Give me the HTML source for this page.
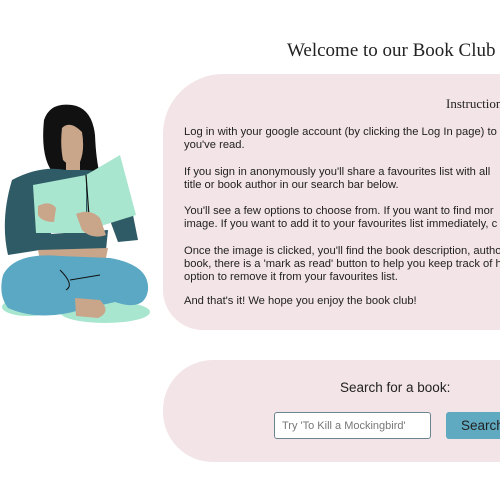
<!DOCTYPE html>
<html><head><style>
body{margin:0;width:500px;height:500px;overflow:hidden;background:#fff;font-family:"Liberation Sans",sans-serif;position:relative}
h1{position:absolute;left:287px;top:40px;margin:0;font:19px "Liberation Serif",serif;white-space:nowrap;color:#222}
.p1{position:absolute;left:163px;top:74px;width:400px;height:256px;background:#f3e4e7;border-radius:60px 0 0 40px}
.p2{position:absolute;left:163px;top:360px;width:400px;height:102px;background:#f3e4e7;border-radius:50px 0 0 50px}
.t{position:absolute;left:184px;font-size:11.2px;line-height:13px;color:#222;white-space:nowrap}
</style></head><body>
<h1>Welcome to our Book Club</h1>
<div class="p1"></div>
<div class="p2"></div>
<div style="position:absolute;left:446px;top:96px;font:13px 'Liberation Serif',serif;color:#222;white-space:nowrap">Instructions</div>
<div class="t" style="top:126px">Log in with your google account (by clicking the Log In page) to<br>you've read.</div>
<div class="t" style="top:166px">If you sign in anonymously you'll share a favourites list with all<br>title or book author in our search bar below.</div>
<div class="t" style="top:205px">You'll see a few options to choose from. If you want to find mor<br>image. If you want to add it to your favourites list immediately, c</div>
<div class="t" style="top:245px">Once the image is clicked, you'll find the book description, autho<br>book, there is a 'mark as read' button to help you keep track of h<br>option to remove it from your favourites list.</div>
<div class="t" style="top:295px">And that's it! We hope you enjoy the book club!</div>
<div style="position:absolute;left:340px;top:380px;font-size:13.5px;color:#222;white-space:nowrap">Search for a book:</div>
<div style="position:absolute;left:274px;top:412px;width:157px;height:27px;box-sizing:border-box;border:1px solid #6b8590;border-radius:3px;background:#fff;font-size:11px;color:#777;padding:7px 0 0 7px;white-space:nowrap">Try 'To Kill a Mockingbird'</div>
<div style="position:absolute;left:446px;top:412px;width:70px;height:27px;background:#5fa9c1;border-radius:3px;font-size:13.5px;color:#222;padding:6px 0 0 15px;box-sizing:border-box">Search</div>
<svg style="position:absolute;left:0;top:90px" width="170" height="240" viewBox="0 0 170 240">
<ellipse cx="105" cy="222" rx="45" ry="11" fill="#a8e6cf"/>
<ellipse cx="28" cy="217" rx="26" ry="9" fill="#a8e6cf"/>
<path d="M44 30 Q50 12 72 15 Q92 18 95 45 Q96 70 100 85 L80 88 L55 85 Q40 70 44 30Z" fill="#111"/>
<path d="M62 38 Q70 30 82 42 Q85 60 80 72 Q70 78 63 70 Q60 55 62 38Z" fill="#c9a58a"/>
<path d="M66 70 L80 70 L80 80 L66 80Z" fill="#c9a58a"/>
<path d="M12 90 Q40 75 66 80 L80 80 Q105 78 128 100 L138 150 L118 152 L108 125 L60 130 L40 160 L8 165 Q0 130 12 90 Z" fill="#2f5b66"/>
<path d="M36 145 L108 140 L106 160 L40 162Z" fill="#2f5b66"/>
<path d="M38 160 L108 158 L106 168 L40 170Z" fill="#c9a58a"/>
<path d="M3 185 Q15 162 60 166 L110 168 Q150 175 148 200 Q145 222 115 212 L80 220 Q40 232 8 218 Q-2 205 3 185Z" fill="#5aa8c4"/>
<path d="M75 208 L100 210 Q112 222 98 228 L76 226Z" fill="#c9a58a"/>
<path d="M33 95 L86 85 L86 143 L36 143Z" fill="#a8e6cf"/>
<path d="M86 85 L120 65 L136 125 L88 140Z" fill="#a8e6cf"/>
<path d="M86 85 L90 140" stroke="#111" stroke-width="1.2" fill="none"/>
<path d="M38 116 Q50 110 56 118 L54 132 Q42 132 38 125Z" fill="#c9a58a"/>
<path d="M76 124 Q90 118 100 128 L106 145 Q92 150 82 140Z" fill="#c9a58a"/>
<path d="M60 180 Q75 195 66 200 M70 190 L100 185" stroke="#111" stroke-width="1" fill="none"/>
</svg>
</body></html>
